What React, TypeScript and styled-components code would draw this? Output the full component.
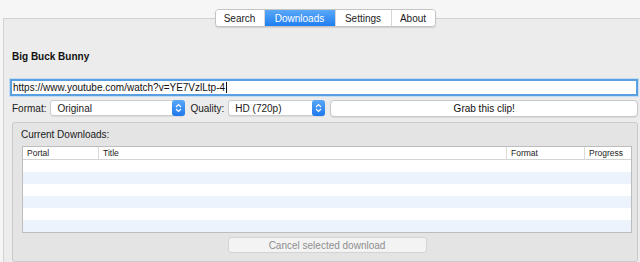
import styled, { createGlobalStyle } from "styled-components"

const GlobalStyle = createGlobalStyle`
  html, body {
    margin: 0;
    padding: 0;
    background: #f6f6f6;
  }
  body {
    font-family: "Liberation Sans", Arial, sans-serif;
    font-size: 10px;
    color: #1a1a1a;
  }
`

const tabs = ["Search", "Downloads", "Settings", "About"]
const tabWidths = [48, 70, 55, 43]
const columns = ["Portal", "Title", "Format", "Progress"]

function Stepper() {
  return (
    <StArrow>
      <svg width="7" height="10" viewBox="0 0 7 10">
        <path d="M1 4 L3.5 1.5 L6 4 M1 6 L3.5 8.5 L6 6" fill="none" stroke="#fff" strokeWidth="1.2" />
      </svg>
    </StArrow>
  )
}

function App() {
  return (
    <StWindow>
      <GlobalStyle />
      <StTabBar>
        <StSegments>
          {tabs.map((t, i) => (
            <StTab key={t} $active={i === 1} $width={tabWidths[i]} $last={i === tabs.length - 1}>
              {t}
            </StTab>
          ))}
        </StSegments>
      </StTabBar>
      <StPanel>
        <StTitle>Big Buck Bunny</StTitle>
        <StUrlField>
          https://www.youtube.com/watch?v=YE7VzlLtp-4<StCaret />
        </StUrlField>
        <StOptionsRow>
          <StLabel>Format:</StLabel>
          <StSelect $width={135}>
            <span>Original</span>
            <Stepper />
          </StSelect>
          <StLabel>Quality:</StLabel>
          <StSelect $width={97}>
            <span>HD (720p)</span>
            <Stepper />
          </StSelect>
          <StGrabButton>Grab this clip!</StGrabButton>
        </StOptionsRow>
        <StGroup>
          <StGroupLabel>Current Downloads:</StGroupLabel>
          <StTable>
            <StHeader>
              {columns.map((c, i) => (
                <StHeadCell key={c} $last={i === columns.length - 1}>{c}</StHeadCell>
              ))}
            </StHeader>
            {Array.from({ length: 6 }, (_, i) => (
              <StRow key={i} $odd={i % 2 === 1} />
            ))}
          </StTable>
          <StCancelButton>Cancel selected download</StCancelButton>
        </StGroup>
      </StPanel>
    </StWindow>
  )
}

export default App

const StWindow = styled.div`
  width: 640px;
  height: 262px;
  overflow: hidden;
  padding-top: 9px;
  box-sizing: border-box;
`

const StTabBar = styled.div`
  display: flex;
  justify-content: center;
  padding-left: 10px;
  height: 18px;
  margin-bottom: -9px;
  position: relative;
  z-index: 1;
`

const StSegments = styled.div`
  display: flex;
  background: #fff;
  border: 1px solid #c4c4c4;
  border-radius: 4px;
  box-shadow: 0 1px 1px rgba(0, 0, 0, 0.12);
  overflow: hidden;
`

const StTab = styled.div<{ $active: boolean; $width: number; $last: boolean }>`
  width: ${(p) => p.$width}px;
  display: flex;
  align-items: center;
  justify-content: center;
  font-size: 10px;
  color: ${(p) => (p.$active ? "#fff" : "#1c1c1c")};
  background: ${(p) => (p.$active ? "linear-gradient(#5aa8f9, #1f7ef1)" : "#fff")};
  border-right: ${(p) => (p.$last ? "none" : "1px solid #d6d6d6")};
`

const StPanel = styled.div`
  margin-left: 3px;
  margin-right: -3px;
  height: 260px;
  background: #ececec;
  border: 1px solid #d2d2d2;
  padding: 32px 4px 0 6px;
  box-sizing: border-box;
`

const StTitle = styled.div`
  font-weight: 700;
  font-size: 10px;
  line-height: 12px;
  padding-left: 2px;
  color: #111;
`

const StUrlField = styled.div`
  margin-top: 16px;
  height: 17px;
  box-sizing: border-box;
  border: 2px solid #5a9fdf;
  box-shadow: 0 0 0 1px #c3dcf3;
  background: #fff;
  display: flex;
  align-items: center;
  padding-left: 1px;
  font-size: 10px;
  color: #111;
`

const StCaret = styled.span`
  display: inline-block;
  width: 1px;
  height: 11px;
  background: #111;
  margin-left: 1px;
`

const StOptionsRow = styled.div`
  display: flex;
  align-items: center;
  margin-top: 3px;
  height: 18px;
  padding-left: 2px;
`

const StLabel = styled.span`
  font-size: 10px;
  color: #1a1a1a;
  margin-right: 4px;
`

const StSelect = styled.div<{ $width: number }>`
  width: ${(p) => p.$width}px;
  height: 16px;
  box-sizing: border-box;
  display: flex;
  align-items: center;
  justify-content: space-between;
  background: #fff;
  border: 1px solid #cdcdcd;
  border-radius: 3px;
  box-shadow: 0 1px 1px rgba(0, 0, 0, 0.08);
  padding-left: 6px;
  margin-right: 5px;
  font-size: 10px;
  color: #1a1a1a;
`

const StArrow = styled.div`
  width: 13px;
  height: 16px;
  margin-right: -1px;
  border-radius: 3px;
  background: linear-gradient(#5aa8f9, #1d78ec);
  display: flex;
  align-items: center;
  justify-content: center;
`

const StGrabButton = styled.div`
  flex: 1;
  height: 17px;
  box-sizing: border-box;
  display: flex;
  align-items: center;
  justify-content: center;
  background: #fff;
  border: 1px solid #c8c8c8;
  border-radius: 4px;
  box-shadow: 0 1px 1px rgba(0, 0, 0, 0.08);
  font-size: 10px;
  color: #111;
`

const StGroup = styled.div`
  margin: 5px 0 0 2px;
  height: 140px;
  box-sizing: border-box;
  background: #e4e4e4;
  border: 1px solid #c9c9c9;
  border-radius: 3px;
  padding: 6px 5px 0 9px;
  display: flex;
  flex-direction: column;
`

const StGroupLabel = styled.div`
  font-size: 10px;
  line-height: 12px;
  margin-left: -1px;
  color: #1a1a1a;
`

const StTable = styled.div`
  margin-top: 5px;
  border: 1px solid #bdbdbd;
  background: #fff;
`

const StHeader = styled.div`
  display: grid;
  grid-template-columns: 76px 408px 78px 1fr;
  height: 13px;
  box-sizing: border-box;
  border-bottom: 1px solid #d4d4d4;
`

const StHeadCell = styled.div<{ $last: boolean }>`
  font-size: 8.5px;
  line-height: 12px;
  padding-left: 4px;
  color: #222;
  border-right: ${(p) => (p.$last ? "none" : "1px solid #dadada")};
`

const StRow = styled.div<{ $odd: boolean }>`
  height: 12px;
  background: ${(p) => (p.$odd ? "#edf3fd" : "#fff")};
`

const StCancelButton = styled.div`
  align-self: center;
  margin-top: 4px;
  width: 199px;
  height: 16px;
  box-sizing: border-box;
  display: flex;
  align-items: center;
  justify-content: center;
  background: #f3f3f3;
  border: 1px solid #d4d4d4;
  border-radius: 3px;
  font-size: 10px;
  color: #8e8e8e;
`
